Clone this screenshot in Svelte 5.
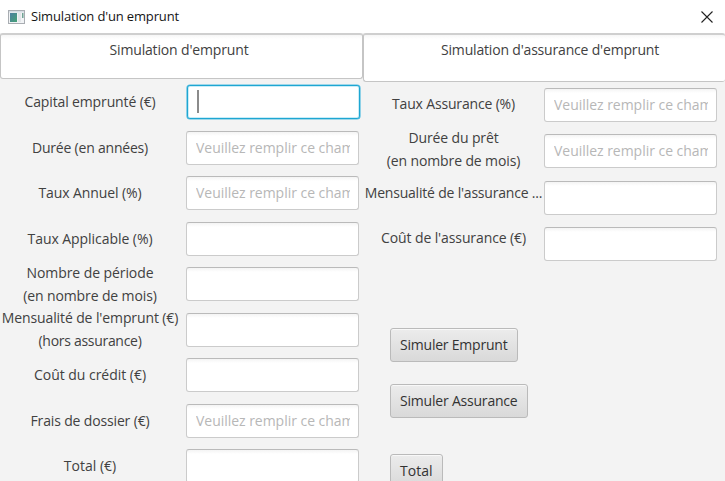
<script>
  const hint = 'Veuillez remplir ce champ';
  // Each label line is [text, advance width in px].
  const loan = [
    { lines: [['Capital emprunté (€)', 131]], focused: true },
    { lines: [['Durée (en années)', 116]], hint },
    { lines: [['Taux Annuel (%)', 103]], hint },
    { lines: [['Taux Applicable (%)', 125]] },
    { lines: [['Nombre de période', 127], ['(en nombre de mois)', 133.5]], lift: -1.5 },
    { lines: [["Mensualité de l'emprunt (€)", 176.5], ['(hors assurance)', 103]] },
    { lines: [['Coût du crédit (€)', 112]] },
    { lines: [['Frais de dossier (€)', 119]], hint },
    { lines: [['Total (€)', 52.5]] }
  ];
  const insurance = [
    { lines: [['Taux Assurance (%)', 123]], hint, lift: 1 },
    { lines: [['Durée du prêt', 90], ['(en nombre de mois)', 133.5]], hint, lift: 4 },
    { lines: [["Mensualité de l'assurance ...", 177.5]], lift: 9 },
    { lines: [["Coût de l'assurance (€)", 145]], lift: 12 }
  ];
  const buttons = [
    { text: 'Simuler Emprunt', width: 107.5 },
    { text: 'Simuler Assurance', width: 117.5 },
    { text: 'Total', width: 32.5 }
  ];

  // Spreads letters so that the text takes the requested advance width.
  function fit(node, width) {
    const natural = node.getBoundingClientRect().width;
    node.style.letterSpacing = `${(width - natural) / node.textContent.length}px`;
  }
</script>

{#snippet column(title, titleWidth, rows, kind)}
  <section class="pane {kind}">
    <header class="tab"><span use:fit={titleWidth}>{title}</span></header>
    <div class="rows">
      {#each rows as row}
        <div class="row">
          <div class="label" style:padding-bottom="{(row.lift ?? 0) + 1.5}px">
            {#each row.lines as [text, width]}
              <div class="line"><span use:fit={width}>{text}</span></div>
            {/each}
          </div>
          <div class="field" class:focused={row.focused}>
            {#if row.focused}<i class="caret"></i>{/if}
            {#if row.hint}<div class="clip"><span use:fit={167}>{row.hint}</span></div>{/if}
          </div>
        </div>
      {/each}
    </div>
    {#if kind === 'insurance'}
      <div class="actions">
        {#each buttons as b}
          <button><span use:fit={b.width}>{b.text}</span></button>
        {/each}
      </div>
    {/if}
  </section>
{/snippet}

<div class="window">
  <div class="titlebar">
    <svg class="app" width="17" height="14" viewBox="0 0 17 14">
      <defs>
        <linearGradient id="teal" x1="0" y1="0" x2="1" y2="1">
          <stop offset="0" stop-color="#4d7fa0" />
          <stop offset="1" stop-color="#45a176" />
        </linearGradient>
      </defs>
      <rect x=".5" y=".5" width="16" height="13" fill="#f1f3f5" stroke="#a9adb2" />
      <rect x="1" y="1" width="15" height="1.5" fill="#d5dce3" />
      <rect x="2" y="3" width="7" height="9" fill="url(#teal)" />
      <rect x="10" y="3" width="3" height="9" fill="#e2e5e8" />
      <rect x="14" y="3" width="1.5" height="5" fill="#70a394" />
    </svg>
    <span class="name" use:fit={148}>Simulation d'un emprunt</span>
    <svg class="close" width="12" height="12" viewBox="0 0 12 12">
      <path d="M.5 .5 11.5 11.5M11.5 .5 .5 11.5" stroke="#222" stroke-width="1.1" fill="none" />
    </svg>
  </div>
  <main>
    {@render column("Simulation d'emprunt", 139, loan, 'loan')}
    {@render column("Simulation d'assurance d'emprunt", 218, insurance, 'insurance')}
  </main>
</div>

<style>
  .window {
    width: 725px;
    height: 481px;
    overflow: hidden;
    background: #f3f3f3;
    color: #414141;
    font: 14px/23px 'Open Sans', 'Noto Sans', sans-serif;
    white-space: nowrap;
  }
  span { display: inline-block; }
  .titlebar {
    display: flex;
    align-items: center;
    box-sizing: border-box;
    height: 33px;
    padding: 0 12px 0 8px;
    background: #fff;
    color: #151515;
    font-size: 13px;
  }
  .app { margin-right: 6px; }
  .close { margin-left: auto; }
  main { display: flex; }
  .pane { width: 363px; flex: none; }
  .tab {
    box-sizing: border-box;
    height: 46px;
    padding-top: 3px;
    padding-right: 5px;
    border: 1px solid #c5c5c5;
    border-top: 2px solid #cfcfcf;
    border-radius: 3px;
    background: linear-gradient(#f6f6f6, #fff 4px);
    text-align: center;
  }
  .insurance .tab {
    height: 49px;
    margin-right: 1px;
    padding-right: 0;
    padding-left: 11px;
    border-right: none;
  }
  .rows { display: flex; flex-direction: column; }
  .loan .rows { padding: 6.5px 0 0 1px; gap: 11.48px; }
  .insurance .rows { padding: 6px 0 0 1px; gap: 12.4px; }
  .row { display: flex; align-items: center; height: 34px; }
  .label {
    display: flex;
    flex-direction: column;
    align-items: center;
    flex: none;
    width: 178px;
    margin-right: 7px;
  }
  .insurance .label { margin-right: 1px; width: 179px; }
  .line { height: 23px; }
  .field {
    display: flex;
    align-items: center;
    box-sizing: border-box;
    flex: none;
    width: 173px;
    height: 34px;
    padding: 0 8px 1px 9px;
    border: 1px solid #cbcbcb;
    border-top-color: #bababa;
    border-radius: 3px;
    background: linear-gradient(#f4f4f4, #fff 4px);
    color: #b7b7b7;
  }
  .focused {
    margin: 0 0 1px 1px;
    border-color: #1ea6d2;
    box-shadow: 0 0 0 .6px #4cbbe0, inset 0 0 0 1px #c9edf8;
    background: #fff;
  }
  .clip { width: 100%; overflow: hidden; }
  .caret { width: 1.5px; height: 23px; background: #8b8b8b; }
  .actions {
    display: flex;
    flex-direction: column;
    align-items: flex-start;
    padding: 67px 0 0 27px;
  }
  button {
    box-sizing: border-box;
    height: 34px;
    margin: 0 0 22px;
    padding: 0 9px 1px;
    border: 1px solid #bababa;
    border-radius: 3px;
    background: linear-gradient(#ececec, #d9d9d9);
    box-shadow: inset 0 1px 0 #f8f8f8;
    color: #333;
    font: inherit;
  }
  button:nth-child(2) { margin-bottom: 36px; }
</style>
